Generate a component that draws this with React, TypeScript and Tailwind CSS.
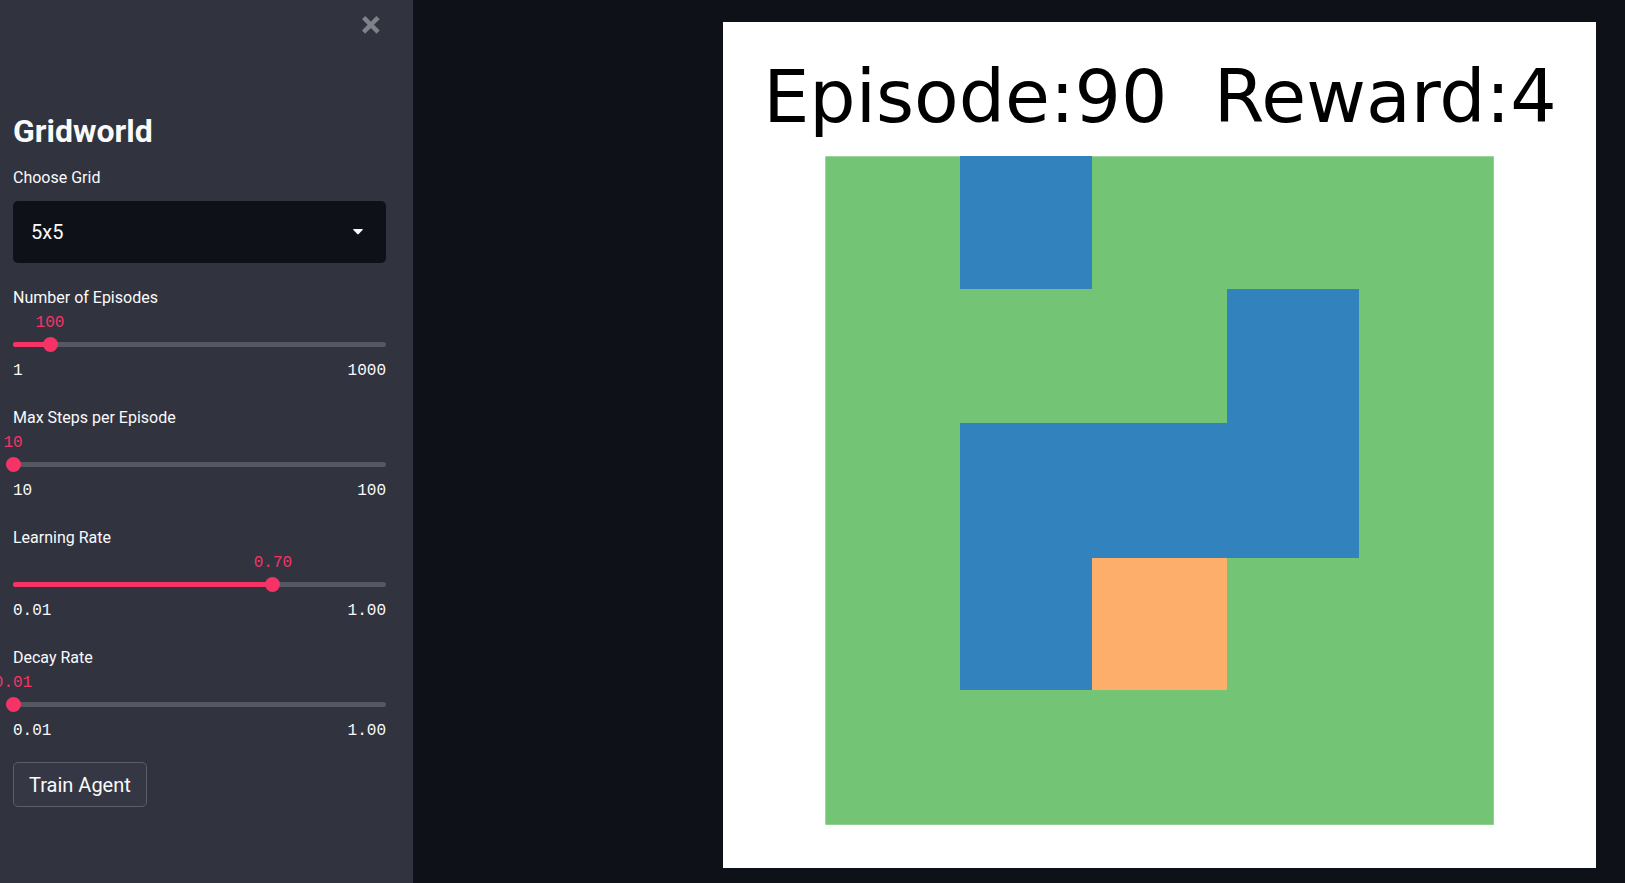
import { useId, useState } from "react";

type SliderProps = {
  label: string;
  min: number;
  max: number;
  step: number;
  initial: number;
  digits?: number;
};

function Slider({ label, min, max, step, initial, digits = 0 }: SliderProps) {
  const id = useId();
  const [value, setValue] = useState(initial);
  const percent = ((value - min) / (max - min)) * 100;

  return (
    <div className="flex h-[120px] flex-col">
      <label htmlFor={id} className="text-base leading-6">
        {label}
      </label>
      <div className="relative h-6 font-['Liberation_Mono',monospace] text-base leading-[26px] text-[#f63366]">
        <output
          htmlFor={id}
          className="absolute -translate-x-1/2"
          style={{ left: `${percent}%` }}
        >
          {value.toFixed(digits)}
        </output>
      </div>
      <div className="relative mt-2 h-[5px] rounded-sm bg-[#555761]">
        <div
          className="h-full rounded-sm bg-[#f63366]"
          style={{ width: `${percent}%` }}
        />
        <input
          id={id}
          type="range"
          min={min}
          max={max}
          step={step}
          value={value}
          onChange={(e) => setValue(Number(e.target.value))}
          className="absolute -top-[5px] -left-[7px] h-[15px] w-[calc(100%+14px)] cursor-pointer appearance-none bg-transparent [&::-webkit-slider-thumb]:size-[15px] [&::-webkit-slider-thumb]:appearance-none [&::-webkit-slider-thumb]:rounded-full [&::-webkit-slider-thumb]:bg-[#f63366]"
        />
      </div>
      <div className="mt-3 flex justify-between font-['Liberation_Mono',monospace] text-base leading-6">
        <span>{min.toFixed(digits)}</span>
        <span>{max.toFixed(digits)}</span>
      </div>
    </div>
  );
}

function Sidebar() {
  return (
    <aside className="flex w-[413px] shrink-0 flex-col bg-[#31333f] pr-[27px] pl-[13px]">
      <div className="flex h-[50px] items-center justify-end pr-[6px]">
        <button type="button" aria-label="Close sidebar" className="text-[#808289]">
          <svg viewBox="0 0 8 8" className="size-[18px]" fill="currentColor">
            <path d="M1.410 0L0 1.410l.72.72L2.500 3.940.72 5.720 0 6.410l1.410 1.440.72-.72 1.810-1.810 1.780 1.810.69.72 1.440-1.440-.72-.69-1.810-1.780 1.810-1.810.72-.72L6.410 0l-.69.72L3.940 2.500 2.130.72z" />
          </svg>
        </button>
      </div>
      <h1 className="mt-[61px] text-[32px] leading-10 font-bold">Gridworld</h1>
      <label htmlFor="grid" className="mt-[15px] text-base leading-6">
        Choose Grid
      </label>
      <div className="relative mt-[11px]">
        <select
          id="grid"
          defaultValue="5x5"
          className="h-[62px] w-full appearance-none rounded-[5px] bg-[#0e1117] px-[18px] text-xl"
        >
          <option>5x5</option>
        </select>
        <svg
          viewBox="0 0 10 6"
          className="pointer-events-none absolute top-1/2 right-[23px] h-[6px] w-[10px] -translate-y-1/2"
          fill="currentColor"
        >
          <path d="M.7 0h8.600q.9.300.3 1L5.700 5.100q-.7.500-1.400 0L.4 1Q-.2.300.7 0z" />
        </svg>
      </div>
      <div className="mt-[23px]">
        <Slider label="Number of Episodes" min={1} max={1000} step={1} initial={100} />
        <Slider label="Max Steps per Episode" min={10} max={100} step={1} initial={10} />
        <Slider label="Learning Rate" min={0.01} max={1} step={0.01} initial={0.7} digits={2} />
        <Slider label="Decay Rate" min={0.01} max={1} step={0.01} initial={0.01} digits={2} />
      </div>
      <button
        type="button"
        className="-mt-1 h-[45px] self-start rounded-[5px] border border-[#5c5e68] bg-[#353844] px-[15px] text-xl"
      >
        Train Agent
      </button>
    </aside>
  );
}

const water = [
  { x: 237, y: 134, width: 132, height: 133 },
  { x: 504, y: 267, width: 132, height: 134 },
  { x: 237, y: 401, width: 399, height: 135 },
  { x: 237, y: 536, width: 132, height: 132 },
];

function Plot() {
  return (
    <svg viewBox="0 0 873 846" className="block h-auto w-full bg-white" role="img">
      <text
        x="437"
        y="100"
        textAnchor="middle"
        className="fill-black font-['DejaVu_Sans',sans-serif] text-[73px] whitespace-pre"
      >
        {"Episode:90  Reward:4"}
      </text>
      <rect x="102.300" y="134.300" width="668.500" height="668.500" fill="#74c476" />
      {water.map((cell) => (
        <rect key={`${cell.x}-${cell.y}`} {...cell} fill="#3182bd" />
      ))}
      <rect x="369" y="536" width="135" height="132" fill="#fdae6b" />
    </svg>
  );
}

export default function App() {
  return (
    <div className="flex min-h-screen bg-[#0e1117] font-['Roboto','Noto_Sans',sans-serif] text-[#fafafa]">
      <Sidebar />
      <main className="grid flex-1 grid-cols-[281fr_873fr] content-start px-[29px] pt-[22px]">
        <div className="col-start-2">
          <Plot />
        </div>
      </main>
    </div>
  );
}
